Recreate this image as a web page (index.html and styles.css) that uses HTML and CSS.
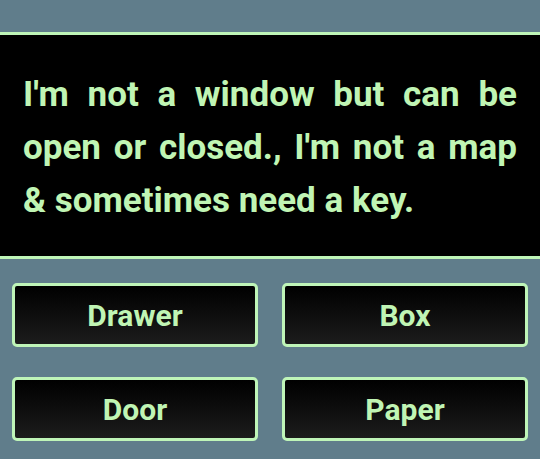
FILE: index.html
```html
<!DOCTYPE html>
<html>
<head>
<meta charset="utf-8">
<link rel="stylesheet" href="styles.css">
</head>
<body>
<div class="screen">
  <div class="riddle">
    <p class="riddle-text">I'm not a window but can be open or closed., I'm not a map &amp; sometimes need a key.</p>
  </div>
  <div class="answers">
    <button class="answer">Drawer</button>
    <button class="answer">Box</button>
    <button class="answer">Door</button>
    <button class="answer">Paper</button>
  </div>
</div>
</body>
</html>
```
FILE: styles.css
```css
html, body {
  margin: 0;
  padding: 0;
}
body {
  background: #607d8b;
  width: 540px;
  height: 459px;
  overflow: hidden;
  font-family: Roboto, "Liberation Sans", sans-serif;
}
.screen {
  padding-top: 32px;
}
.riddle {
  background: #000;
  border-top: 3px solid #bff5b8;
  border-bottom: 3px solid #bff5b8;
  padding: 33px 23px 29px;
}
.riddle-text {
  margin: 0;
  color: #c0f5b4;
  font-size: 35px;
  font-weight: 700;
  line-height: 53px;
  text-align: justify;
}
.answers {
  display: grid;
  grid-template-columns: 1fr 1fr;
  column-gap: 24px;
  row-gap: 30px;
  padding: 24px 12px 0;
}
.answer {
  height: 64px;
  border: 3px solid #bff5b8;
  border-radius: 5px;
  background: linear-gradient(to bottom, #000 0%, #1c1c1c 100%);
  color: #c0f5b4;
  font-family: Roboto, "Liberation Sans", sans-serif;
  font-size: 30px;
  font-weight: 700;
  padding: 0;
}
```
